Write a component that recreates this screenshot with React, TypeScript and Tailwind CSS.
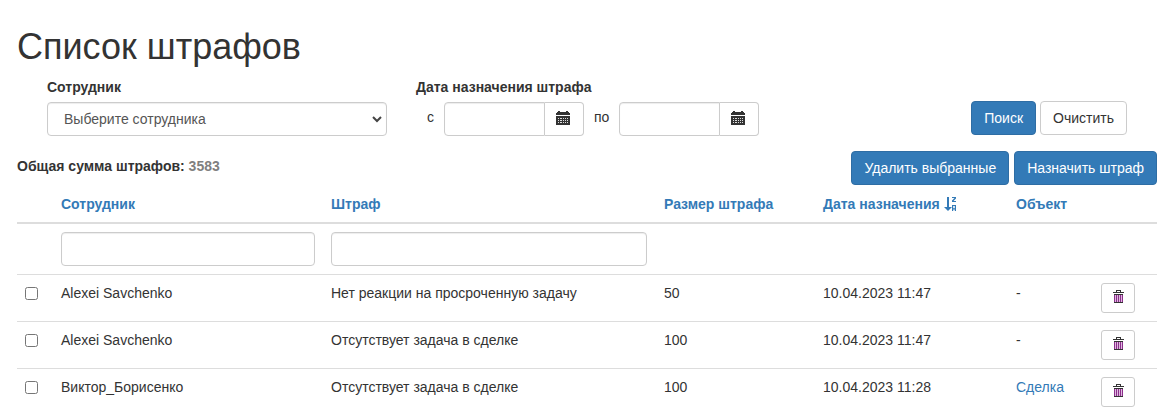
import type { ReactNode } from "react";

const LINK = "text-[#337ab7]";
const control =
  "block h-[34px] w-full border border-[#ccc] bg-white px-3 text-[14px] text-[#555] shadow-[inset_0_1px_1px_rgba(0,0,0,0.075)] outline-none";

const fines = [
  { id: 1, employee: "Alexei Savchenko", fine: "Нет реакции на просроченную задачу", amount: 50, date: "10.04.2023 11:47", object: null },
  { id: 2, employee: "Alexei Savchenko", fine: "Отсутствует задача в сделке", amount: 100, date: "10.04.2023 11:47", object: null },
  { id: 3, employee: "Виктор_Борисенко", fine: "Отсутствует задача в сделке", amount: 100, date: "10.04.2023 11:28", object: "Сделка" },
];

function CalendarIcon() {
  return (
    <svg width="14" height="14" viewBox="0 0 14 14" fill="#333" shapeRendering="crispEdges">
      <path d="M2 0h2v1h6V0h2v1h1v1h1v2H0V2h1V1h1z" />
      <path d="M0 5h14v9H0z" />
      <path fill="#ddd" d="M2 7h1v1H2zM4 7h2v1H4zM7 7h1v1H7zM9 7h1v1H9zM11 7h1v1h-1zM2 9h1v1H2zM4 9h2v1H4zM7 9h1v1H7zM9 9h1v1H9zM11 9h1v1h-1zM2 11h1v1H2zM4 11h2v1H4zM7 11h1v1H7zM9 11h1v1H9zM11 11h1v1h-1z" />
    </svg>
  );
}

function SortDescIcon() {
  return (
    <svg width="14" height="14" viewBox="0 0 14 14" fill="#337ab7" className="ml-1 inline-block align-[-2px]">
      <path d="M3 0h2v10h3l-4 4-4-4h3z" />
      <path d="M8 0h4v1.500L9.500 4H12v1H8V3.500L10.500 1H8z" />
      <path fillRule="evenodd" d="M8 8h4v6h-1.200v-1.500H9.200V14H8zM9.200 9v2.300h1.600V9z" />
    </svg>
  );
}

function TrashIcon() {
  return (
    <svg width="12" height="13" viewBox="0 0 12 13" shapeRendering="crispEdges" className="ml-0.5">
      <path fill="#333" d="M3 0h5v2h3v1H0V2h3zM4 1v1h3V1z" fillRule="evenodd" />
      <path fill="#333" d="M1 4h9v9H1z" />
      <path fill="#dfb8df" d="M2 5h7v7H2z" />
      <path fill="#8b2f8b" d="M1 5h1v7H1zM3 5h1v7H3zM5 5h1v7H5zM7 5h1v7H7zM9 5h1v7H9z" />
    </svg>
  );
}

function Button({ primary, children }: { primary?: boolean; children: ReactNode }) {
  return (
    <button
      type="button"
      className={`h-[34px] rounded-[4px] border px-3 whitespace-nowrap ${primary ? "border-[#2e6da4] bg-[#337ab7] text-white" : "border-[#ccc] bg-white text-[#333]"}`}
    >
      {children}
    </button>
  );
}

function DateInput({ label }: { label: string }) {
  return (
    <div className="flex w-[140px]">
      <input type="text" aria-label={label} className={`${control} min-w-0 flex-1 rounded-l-[4px]`} />
      <button type="button" className="flex h-[34px] w-[39px] items-start justify-center rounded-r-[4px] border border-l-0 border-[#ccc] pt-2 pr-0.5">
        <CalendarIcon />
      </button>
    </div>
  );
}

function SearchForm() {
  return (
    <div className="flex h-[72px] items-start pl-[30px]">
      <div className="w-[340px]">
        <div className="mb-[5px] font-bold">Сотрудник</div>
        <div className="relative">
          <select className={`${control} appearance-none rounded-[4px] pl-4`}>
            <option>Выберите сотрудника</option>
          </select>
          <svg width="10" height="7" viewBox="0 0 10 7" fill="none" stroke="#444" strokeWidth="2" className="pointer-events-none absolute top-[14px] right-[5px]">
            <path d="M1 1l4 4 4-4" />
          </svg>
        </div>
      </div>
      <div className="ml-[29px] w-[400px]">
        <div className="mb-[5px] font-bold">Дата назначения штрафа</div>
        <div className="flex">
          <span className="w-7 pt-[5px] pl-[11px]">с</span>
          <DateInput label="Дата с" />
          <span className="w-[35px] pt-[5px] pl-[10px]">по</span>
          <DateInput label="Дата по" />
        </div>
      </div>
      <div className="mt-6 mr-[30px] ml-auto flex gap-1">
        <Button primary>Поиск</Button>
        <Button>Очистить</Button>
      </div>
    </div>
  );
}

function FinesTable() {
  return (
    <table className="w-[1140px] table-fixed border-collapse text-left">
      <colgroup>
        <col className="w-9" />
        <col className="w-[270px]" />
        <col className="w-[333px]" />
        <col className="w-[159px]" />
        <col className="w-[193px]" />
        <col className="w-[85px]" />
        <col className="w-16" />
      </colgroup>
      <thead>
        <tr className={`h-[37px] border-b-2 border-[#ddd] ${LINK} [&>th]:px-2 [&>th]:py-0 [&>th]:whitespace-nowrap`}>
          <th />
          <th>Сотрудник</th>
          <th>Штраф</th>
          <th>Размер штрафа</th>
          <th>Дата назначения<SortDescIcon /></th>
          <th>Объект</th>
          <th />
        </tr>
        <tr className="h-[51px] [&>td]:px-2 [&>td]:py-0">
          <td />
          <td><input type="text" aria-label="Сотрудник" className={`${control} rounded-[4px]`} /></td>
          <td><input type="text" aria-label="Штраф" className={`${control} max-w-[316px] rounded-[4px]`} /></td>
          <td colSpan={4} />
        </tr>
      </thead>
      <tbody>
        {fines.map((row) => (
          <tr key={row.id} className="h-[47px] border-t border-[#ddd] align-top [&>td]:px-2 [&>td]:pt-2 [&>td]:pb-0">
            <td>
              <input type="checkbox" aria-label={row.employee} className="mt-1 block size-[13px]" />
            </td>
            <td>{row.employee}</td>
            <td>{row.fine}</td>
            <td>{row.amount}</td>
            <td>{row.date}</td>
            <td>{row.object ? <a href="#" className={LINK}>{row.object}</a> : "-"}</td>
            <td>
              <button type="button" aria-label="Удалить" className="flex h-[30px] w-[34px] items-start justify-center rounded-[3px] border border-[#ccc] pt-1.5">
                <TrashIcon />
              </button>
            </td>
          </tr>
        ))}
      </tbody>
    </table>
  );
}

export default function App() {
  return (
    <div className="h-[415px] overflow-hidden bg-white pt-[27px] pl-[17px] font-['Liberation_Sans',Arial,sans-serif] text-[14px] leading-5 text-[#333]">
      <div className="w-[1140px]">
        <h1 className="mb-[10px] text-[36px] leading-[40px] font-medium">Список штрафов</h1>
        <SearchForm />
        <div className="flex h-[37px] items-start justify-between pt-[2px]">
          <div className="pt-[5px] font-bold">
            Общая сумма штрафов: <span className="text-[#808080]">3583</span>
          </div>
          <div className="flex gap-[5px]">
            <Button primary>Удалить выбранные</Button>
            <Button primary>Назначить штраф</Button>
          </div>
        </div>
        <FinesTable />
      </div>
    </div>
  );
}
